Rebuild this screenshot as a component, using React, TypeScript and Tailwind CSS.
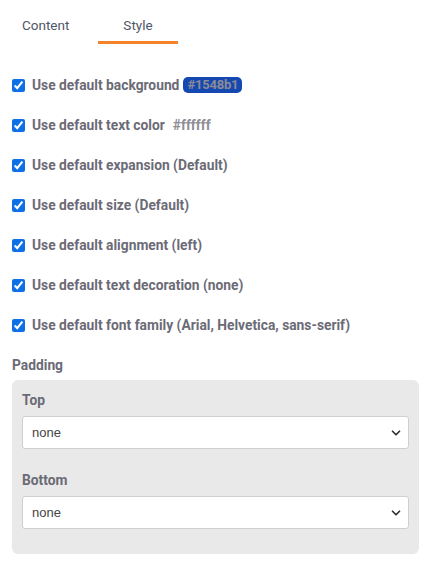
import { ChevronDown } from 'lucide-react'

const options = [
  { label: 'Use default background', value: '#1548b1', badge: true },
  { label: 'Use default text color', value: '#ffffff' },
  { label: 'Use default expansion (Default)' },
  { label: 'Use default size (Default)' },
  { label: 'Use default alignment (left)' },
  { label: 'Use default text decoration (none)' },
  { label: 'Use default font family (Arial, Helvetica, sans-serif)' },
]

export default function App() {
  return (
    <div className="w-[431px] min-h-[567px] bg-white font-['Roboto',sans-serif] text-[#6b6b76]">
      {/* Tabs */}
      <div className="flex">
        <div className="w-[98px] pl-[22px] pt-[16px] leading-[18px] text-[13.5px] text-[#505569]">Content</div>
        <div className="w-[80px] h-[44px] text-center border-b-[3px] border-[#f5822a] pt-[16px] leading-[18px] text-[13.5px] text-[#505569]">
          Style
        </div>
      </div>

      {/* Checkboxes */}
      <div className="flex flex-col gap-[22px] mt-[32px] px-[12px]">
        {options.map((o) => (
          <label key={o.label} className="flex items-center h-[18px] gap-[7px]">
            <input type="checkbox" defaultChecked className="w-[13px] h-[13px] accent-[#0f6fe6]" />
            <span className="text-[13.8px] font-bold">{o.label}</span>
            {o.value &&
              (o.badge ? (
                <span className="-ml-[3px] px-[4px] rounded-[5px] bg-[#1548b1] text-[13px] font-bold leading-[16px] tracking-[-0.2px] text-[#8b8b95]">
                  {o.value}
                </span>
              ) : (
                <span className="ml-[1px] text-[13.8px] font-bold text-[#8e8e96]">{o.value}</span>
              ))}
          </label>
        ))}
      </div>

      {/* Padding */}
      <div className="px-[12px] mt-[21px]">
        <div className="text-[13.8px] font-bold leading-[20px]">Padding</div>
        <div className="mt-[5px] rounded-[6px] bg-[#e9e9e9] px-[10px] pt-[10px] pb-[25px]">
          {['Top', 'Bottom'].map((l, i) => (
            <div key={l} className={i ? 'mt-[21px]' : ''}>
              <div className="text-[13.8px] font-bold leading-[20px] mb-[6px]">{l}</div>
              <div className="relative h-[33px] rounded-[3px] border border-[#cfcfcf] bg-white flex items-center px-[9px] font-['Liberation_Sans',sans-serif] text-[13px] text-[#444]">
                none
                <ChevronDown size={14} strokeWidth={3} className="absolute right-[5px] text-[#333]" />
              </div>
            </div>
          ))}
        </div>
      </div>
    </div>
  )
}
